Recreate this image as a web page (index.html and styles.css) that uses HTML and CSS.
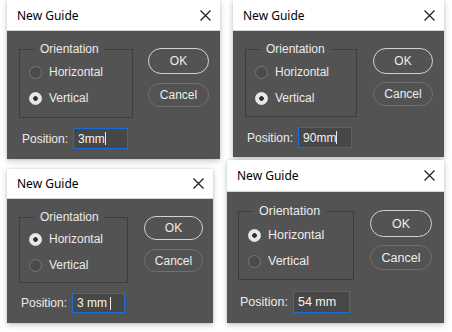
FILE: index.html
```html
<!DOCTYPE html>
<html lang="en">
<head>
  <meta charset="UTF-8">
  <title>New Guide</title>
  <link rel="stylesheet" href="styles.css">
</head>
<body>
  <div class="sheet">

    <div class="cell cell-1">
      <div class="dialog d1">
        <div class="titlebar">
          <span class="title">New Guide</span>
          <svg class="close" width="11" height="11" viewBox="0 0 11 11"><path d="M0.5 0.5L10.5 10.5M10.5 0.5L0.5 10.5"/></svg>
        </div>
        <div class="dialog-body">
          <div class="top-row">
            <fieldset class="orient">
              <legend>Orientation</legend>
              <label class="radio-row"><span class="radio"></span>Horizontal</label>
              <label class="radio-row"><span class="radio checked"></span>Vertical</label>
            </fieldset>
            <div class="buttons">
              <button class="btn btn-ok">OK</button>
              <button class="btn btn-cancel">Cancel</button>
            </div>
          </div>
          <div class="pos-row">
            <span class="pos-label">Position:</span>
            <div class="field">3mm<span class="caret"></span></div>
          </div>
        </div>
      </div>
    </div>

    <div class="cell cell-2">
      <div class="dialog d2">
        <div class="titlebar">
          <span class="title">New Guide</span>
          <svg class="close" width="11" height="11" viewBox="0 0 11 11"><path d="M0.5 0.5L10.5 10.5M10.5 0.5L0.5 10.5"/></svg>
        </div>
        <div class="dialog-body">
          <div class="top-row">
            <fieldset class="orient">
              <legend>Orientation</legend>
              <label class="radio-row"><span class="radio"></span>Horizontal</label>
              <label class="radio-row"><span class="radio checked"></span>Vertical</label>
            </fieldset>
            <div class="buttons">
              <button class="btn btn-ok">OK</button>
              <button class="btn btn-cancel">Cancel</button>
            </div>
          </div>
          <div class="pos-row">
            <span class="pos-label">Position:</span>
            <div class="field">90mm<span class="caret"></span></div>
          </div>
        </div>
      </div>
    </div>

    <div class="cell cell-3">
      <div class="dialog d3">
        <div class="titlebar">
          <span class="title">New Guide</span>
          <svg class="close" width="11" height="11" viewBox="0 0 11 11"><path d="M0.5 0.5L10.5 10.5M10.5 0.5L0.5 10.5"/></svg>
        </div>
        <div class="dialog-body">
          <div class="top-row">
            <fieldset class="orient">
              <legend>Orientation</legend>
              <label class="radio-row"><span class="radio checked"></span>Horizontal</label>
              <label class="radio-row"><span class="radio"></span>Vertical</label>
            </fieldset>
            <div class="buttons">
              <button class="btn btn-ok">OK</button>
              <button class="btn btn-cancel">Cancel</button>
            </div>
          </div>
          <div class="pos-row">
            <span class="pos-label">Position:</span>
            <div class="field">3 mm&nbsp;<span class="caret"></span></div>
          </div>
        </div>
      </div>
    </div>

    <div class="cell cell-4">
      <div class="dialog d4">
        <div class="titlebar">
          <span class="title">New Guide</span>
          <svg class="close" width="11" height="11" viewBox="0 0 11 11"><path d="M0.5 0.5L10.5 10.5M10.5 0.5L0.5 10.5"/></svg>
        </div>
        <div class="dialog-body">
          <div class="top-row">
            <fieldset class="orient">
              <legend>Orientation</legend>
              <label class="radio-row"><span class="radio checked"></span>Horizontal</label>
              <label class="radio-row"><span class="radio"></span>Vertical</label>
            </fieldset>
            <div class="buttons">
              <button class="btn btn-ok">OK</button>
              <button class="btn btn-cancel">Cancel</button>
            </div>
          </div>
          <div class="pos-row">
            <span class="pos-label">Position:</span>
            <div class="field">54 mm</div>
          </div>
        </div>
      </div>
    </div>

  </div>
</body>
</html>
```

FILE: styles.css
```css
body {
  margin: 0;
  background-color: #ffffff;
  font-family: 'Liberation Sans', Arial, sans-serif;
}

.sheet {
  display: grid;
  grid-template-columns: 226px 226px;
  grid-template-rows: 160px 172px;
  width: 452px;
  height: 332px;
  overflow: hidden;
}

.cell-1 { padding-left: 7px; }
.cell-2 { padding-left: 7px; }
.cell-3 { padding: 9px 0 0 7px; }
.cell-4 { padding-left: 1px; }

/* per dialog sizes, the four captures differ by a few pixels */
.d1 {
  --w: 213px; --title-h: 31px; --pt: 11px; --pl: 12px; --pr: 11px; --pb: 10px;
  --fs-w: 114px; --fs-pt: 3px; --fs-pb: 6px;
  --btn-w: 61px; --ok-h: 26px; --cancel-h: 24px; --btn-gap: 9px;
  --row-gap: 10px; --in-w: 55px; --in-h: 21px; --label-l: 3px; --fsize: 12px;
}

.d2 {
  --w: 211px; --title-h: 31px; --pt: 11px; --pl: 12px; --pr: 11px; --pb: 9px;
  --fs-w: 112px; --fs-pt: 3px; --fs-pb: 5px;
  --btn-w: 60px; --ok-h: 26px; --cancel-h: 24px; --btn-gap: 8px;
  --row-gap: 10px; --in-w: 54px; --in-h: 21px; --label-l: 2px; --fsize: 12px;
}

.d3 {
  --w: 206px; --title-h: 30px; --pt: 11px; --pl: 12px; --pr: 10px; --pb: 10px;
  --fs-w: 109px; --fs-pt: 2px; --fs-pb: 4px;
  --btn-w: 59px; --ok-h: 24px; --cancel-h: 23px; --btn-gap: 9px;
  --row-gap: 10px; --in-w: 53px; --in-h: 20px; --label-l: 2px; --fsize: 12px;
}

.d4 {
  --w: 217px; --title-h: 32px; --pt: 12px; --pl: 11px; --pr: 12px; --pb: 10px;
  --fs-w: 116px; --fs-pt: 4px; --fs-pb: 5px;
  --btn-w: 62px; --ok-h: 27px; --cancel-h: 25px; --btn-gap: 8px;
  --row-gap: 11px; --in-w: 57px; --in-h: 22px; --label-l: 2px; --fsize: 12.5px;
}

.dialog {
  width: var(--w);
  box-shadow: 0 2px 6px rgba(0, 0, 0, 0.22), 0 0 2px rgba(0, 0, 0, 0.12);
}

.titlebar {
  height: var(--title-h);
  background-color: #ffffff;
  display: flex;
  align-items: center;
  justify-content: space-between;
  padding: 0 9px 0 10px;
  border-bottom: 1px solid #d4d4d4;
  box-sizing: border-box;
}

.title {
  font-family: 'Noto Sans', 'Open Sans', sans-serif;
  font-size: 12px;
  color: #000000;
}

.close path {
  stroke: #1e1e1e;
  stroke-width: 1.2;
  fill: none;
}

.dialog-body {
  background-color: #535353;
  color: #ebebeb;
  font-size: var(--fsize);
  padding: var(--pt) var(--pr) var(--pb) var(--pl);
  display: flex;
  flex-direction: column;
}

.top-row {
  display: flex;
  justify-content: space-between;
  align-items: flex-start;
}

.orient {
  width: var(--fs-w);
  box-sizing: border-box;
  margin: 0;
  padding: var(--fs-pt) 4px var(--fs-pb) 9px;
  border: 1px solid #3d3d3d;
  min-inline-size: 0;
}

.orient legend {
  padding: 0 6px;
  margin-left: 5px;
  line-height: 14px;
}

.radio-row {
  display: flex;
  align-items: center;
  height: 26px;
  gap: 7px;
}

.radio {
  width: 13px;
  height: 13px;
  box-sizing: border-box;
  border-radius: 50%;
  border: 1px solid #767676;
  background-color: #4b4b4b;
  flex: none;
}

.radio.checked {
  border-color: #e8e8e8;
  background: radial-gradient(circle, #2e2e2e 0 2px, #e8e8e8 2.6px);
}

.buttons {
  display: flex;
  flex-direction: column;
  gap: var(--btn-gap);
  margin-top: 6px;
}

.btn {
  width: var(--btn-w);
  box-sizing: border-box;
  font-family: inherit;
  font-size: var(--fsize);
  color: #ededed;
  background-color: #535353;
  border-radius: 14px;
  padding: 0;
}

.btn-ok {
  height: var(--ok-h);
  border: 1.5px solid #d2d2d2;
}

.btn-cancel {
  height: var(--cancel-h);
  border: 1px solid #707070;
}

.pos-row {
  display: flex;
  align-items: center;
  margin-top: var(--row-gap);
  padding-left: var(--label-l);
}

.pos-label {
  margin-right: 5px;
}

.field {
  width: var(--in-w);
  height: var(--in-h);
  box-sizing: border-box;
  border: 1.5px solid #1a6fd6;
  background-color: #474747;
  color: #f4f4f4;
  padding-left: 4px;
  display: flex;
  align-items: center;
  white-space: pre;
}

.caret {
  width: 1px;
  height: 13px;
  background-color: #e6e6e6;
}
```
